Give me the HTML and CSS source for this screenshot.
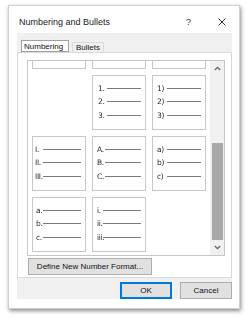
FILE: index.html
```html
<!DOCTYPE html>
<html>
<head>
<meta charset="utf-8">
<link rel="stylesheet" href="styles.css">
</head>
<body>
<div class="frame">
  <div class="titlebar">
    <span class="title">Numbering and Bullets</span>
    <span class="help">?</span>
    <svg class="close" width="8" height="8" viewBox="0 0 8 8"><path d="M0.5 0.5L7.5 7.5M7.5 0.5L0.5 7.5" stroke="#333" stroke-width="1" fill="none"/></svg>
  </div>
  <div class="client">
    <div class="tabs">
      <div class="tab active">Numbering</div>
      <div class="tab">Bullets</div>
    </div>
    <div class="page">
      <div class="listbox">
        <div class="view">
          <div class="gallery">
            <div class="cell"></div>
            <div class="cell"></div>
            <div class="cell"></div>

            <div class="blank"></div>
            <div class="cell dec">
              <div class="item"><span class="n">1.</span><span class="ln"></span></div>
              <div class="item"><span class="n">2.</span><span class="ln"></span></div>
              <div class="item"><span class="n">3.</span><span class="ln"></span></div>
            </div>
            <div class="cell paren">
              <div class="item"><span class="n">1)</span><span class="ln"></span></div>
              <div class="item"><span class="n">2)</span><span class="ln"></span></div>
              <div class="item"><span class="n">3)</span><span class="ln"></span></div>
            </div>

            <div class="cell roman">
              <div class="item"><span class="n">I.</span><span class="ln"></span></div>
              <div class="item"><span class="n">II.</span><span class="ln"></span></div>
              <div class="item"><span class="n">III.</span><span class="ln"></span></div>
            </div>
            <div class="cell upper">
              <div class="item"><span class="n">A.</span><span class="ln"></span></div>
              <div class="item"><span class="n">B.</span><span class="ln"></span></div>
              <div class="item"><span class="n">C.</span><span class="ln"></span></div>
            </div>
            <div class="cell paren">
              <div class="item"><span class="n">a)</span><span class="ln"></span></div>
              <div class="item"><span class="n">b)</span><span class="ln"></span></div>
              <div class="item"><span class="n">c)</span><span class="ln"></span></div>
            </div>

            <div class="cell lower">
              <div class="item"><span class="n">a.</span><span class="ln"></span></div>
              <div class="item"><span class="n">b.</span><span class="ln"></span></div>
              <div class="item"><span class="n">c.</span><span class="ln"></span></div>
            </div>
            <div class="cell lroman">
              <div class="item"><span class="n">i.</span><span class="ln"></span></div>
              <div class="item"><span class="n">ii.</span><span class="ln"></span></div>
              <div class="item"><span class="n">iii.</span><span class="ln"></span></div>
            </div>
            <div class="blank"></div>
          </div>
        </div>
        <div class="scrollbar">
          <div class="arrow up"><svg width="7" height="5" viewBox="0 0 7 5"><path d="M0.8 4L3.5 1.3L6.2 4" stroke="#606060" stroke-width="1.2" fill="none"/></svg></div>
          <div class="track"><div class="thumb"></div></div>
          <div class="arrow down"><svg width="7" height="5" viewBox="0 0 7 5"><path d="M0.8 1L3.5 3.7L6.2 1" stroke="#606060" stroke-width="1.2" fill="none"/></svg></div>
        </div>
      </div>
      <button class="btn define">Define New Number Format...</button>
    </div>
    <div class="footer">
      <button class="btn ok">OK</button>
      <button class="btn">Cancel</button>
    </div>
  </div>
</div>
</body>
</html>
```

FILE: styles.css
```css
html, body {
  margin: 0;
  padding: 0;
}
body {
  width: 249px;
  height: 319px;
  overflow: hidden;
  background: #ffffff;
  font-family: "Liberation Sans", Arial, sans-serif;
  color: #1a1a1a;
}
.frame {
  margin: 5px 0 0 8px;
  width: 232px;
  height: 304px;
  box-sizing: border-box;
  border: 1px solid #cfcfcf;
  background: #ffffff;
  box-shadow: 1px 2px 4px rgba(0, 0, 0, 0.45);
  display: flex;
  flex-direction: column;
}
.titlebar {
  height: 27px;
  display: flex;
  align-items: center;
  padding: 4px 0 0 10px;
  box-sizing: border-box;
}
.title {
  flex: 1;
  font-size: 9px;
  color: #1a1a1a;
}
.help {
  font-size: 9.5px;
  color: #333;
  margin-right: 27px;
}
.close {
  margin-right: 13px;
  display: block;
}
.client {
  margin-left: 8px;
  width: 215px;
  height: 266px;
  overflow: hidden;
  background: #f0f0f0;
  display: flex;
  flex-direction: column;
}
.tabs {
  height: 19px;
  display: flex;
  align-items: flex-end;
  padding-left: 4px;
  box-sizing: border-box;
}
.tab {
  font-size: 8px;
  box-sizing: border-box;
  height: 10px;
  line-height: 9px;
  padding: 0 3px;
  border: 1px solid #d9d9d9;
  border-bottom: none;
  margin-left: 3px;
  color: #111;
}
.tab.active {
  height: 12px;
  line-height: 11px;
  width: 48px;
  background: #ffffff;
  border: 1px solid #a0a0a0;
  margin-left: 0;
  padding: 0 2px;
}
.page {
  width: 215px;
  height: 231px;
  box-sizing: border-box;
  background: #ffffff;
  border: 1px solid #d9d9d9;
  padding: 7px 0 0 9px;
  display: flex;
  flex-direction: column;
  align-items: flex-start;
}
.listbox {
  width: 198px;
  height: 196px;
  box-sizing: border-box;
  border: 1px solid #c4c6cc;
  display: flex;
}
.view {
  flex: 1;
  overflow: hidden;
}
.gallery {
  margin-top: -47px;
  padding-left: 4px;
  display: grid;
  grid-template-columns: 54px 54px 54px;
  grid-auto-rows: 55px;
  gap: 6px;
  filter: grayscale(1);
}
.cell {
  box-sizing: border-box;
  border: 1px solid #c8c8c8;
  padding-top: 6px;
  padding-left: 5px;
}
.item {
  height: 13.5px;
  display: flex;
  align-items: center;
  font-size: 7.5px;
  color: #2a2a2a;
  font-family: "DejaVu Sans", "Liberation Sans", sans-serif;
  letter-spacing: -0.3px;
}
.n {
  flex: none;
}
.ln {
  flex: 1;
  height: 1px;
  background: #7a7a7a;
  margin-right: 4px;
}
.dec { padding-left: 5px; }
.dec .n { width: 9px; }
.paren { padding-left: 4px; }
.paren .n { width: 10px; }
.roman { padding-left: 2px; }
.roman .n { width: 8px; }
.upper { padding-left: 4px; }
.upper .n { width: 8px; }
.lower { padding-left: 3px; }
.lower .n { width: 7px; }
.lroman { padding-left: 4px; }
.lroman .n { width: 6px; }
.scrollbar {
  width: 14px;
  background: #f0f0f0;
  display: flex;
  flex-direction: column;
}
.arrow {
  display: flex;
  align-items: center;
  justify-content: center;
}
.arrow svg { display: block; }
.arrow.up { height: 16px; }
.arrow.down { height: 14px; }
.track {
  flex: 1;
  padding: 66px 1px 0 2px;
}
.thumb {
  height: 97px;
  background: #a9a9a9;
}
.btn {
  font-family: "Liberation Sans", Arial, sans-serif;
  font-size: 8px;
  color: #111;
  background: #e1e1e1;
  border: 1px solid #adadad;
  box-sizing: border-box;
  height: 17px;
  padding: 0;
  margin: 0;
}
.define {
  margin: 2px 0 0 1px;
  width: 124px;
}
.footer {
  display: flex;
  padding: 4px 0 0 103px;
  gap: 8px;
}
.footer .btn {
  width: 52px;
  flex: none;
}
.ok {
  border: 1px solid #0078d7;
  box-shadow: inset 0 0 0 1px #0078d7;
}
```
